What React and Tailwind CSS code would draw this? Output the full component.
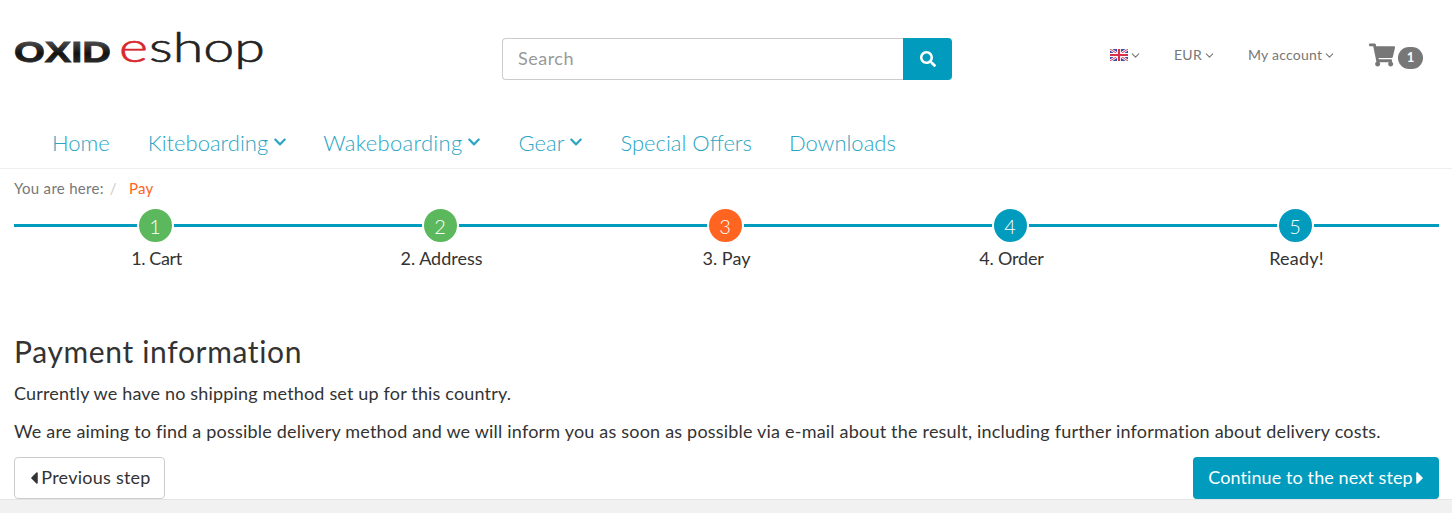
import React from "react";
import { FaSearch, FaShoppingCart, FaChevronDown, FaCaretLeft, FaCaretRight } from "react-icons/fa";
import { ChevronDown } from "lucide-react";

const font = { fontFamily: "Lato, 'Noto Sans', sans-serif" };

function Logo() {
  return (
    <svg width="252" height="38" viewBox="0 0 252 38" className="block overflow-visible">
      <defs>
        <linearGradient id="g" x1="0" y1="0" x2="0" y2="1">
          <stop offset="0" stopColor="#666" />
          <stop offset="0.55" stopColor="#111" />
          <stop offset="1" stopColor="#3a3a3a" />
        </linearGradient>
      </defs>
      <text x="0" y="28" fontFamily="'Liberation Sans', sans-serif" fontWeight="700" fontSize="29" fill="url(#g)" stroke="url(#g)" strokeWidth="0.8" textLength="97" lengthAdjust="spacingAndGlyphs">OXID</text>
      <text x="105" y="28" fontFamily="Lato, sans-serif" fontWeight="300" fontSize="41" fill="#d9272e" stroke="#d9272e" strokeWidth="0.6" textLength="29" lengthAdjust="spacingAndGlyphs">e</text>
      <text x="135" y="28" fontFamily="Lato, sans-serif" fontWeight="300" fontSize="41" fill="#222" stroke="#222" strokeWidth="0.6" textLength="116" lengthAdjust="spacingAndGlyphs">shop</text>
    </svg>
  );
}

function Flag() {
  return (
    <svg width="18" height="12" viewBox="0 0 18 12" className="block">
      <rect width="18" height="12" fill="#3f4fa8" />
      <path d="M0 0L18 12M18 0L0 12" stroke="#fff" strokeWidth="2.6" />
      <path d="M0 0L18 12M18 0L0 12" stroke="#d8405a" strokeWidth="1" />
      <path d="M9 0V12M0 6H18" stroke="#fff" strokeWidth="4" />
      <path d="M9 0V12M0 6H18" stroke="#d8304a" strokeWidth="2.2" />
    </svg>
  );
}

const navItems = [
  ["Home", false, "mr-[0px]"],
  ["Kiteboarding", true, "tracking-[0px]"],
  ["Wakeboarding", true, "tracking-[0.3px] -ml-[2px]"],
  ["Gear", true, "-ml-[1px]"],
  ["Special Offers", false, "-ml-[1px]"],
  ["Downloads", false, "-ml-[1px]"],
];

const steps = [
  ["1", "1. Cart", "bg-[#5cb85c]", "tracking-[-0.4px]"],
  ["2", "2. Address", "bg-[#5cb85c]", ""],
  ["3", "3. Pay", "bg-[#ff6420]", ""],
  ["4", "4. Order", "bg-[#009bbd]", "tracking-[-0.2px]"],
  ["5", "Ready!", "bg-[#009bbd]", "tracking-[0.2px]"],
];

export default function App() {
  return (
    <div style={font} className="w-[1452px] h-[513px] overflow-hidden bg-white flex flex-col text-[#333]">
      <header className="h-[169px] border-b border-[#eeeeee] shrink-0 flex flex-col">
        <div className="flex items-start h-[118px] pl-[14px]">
          <div className="w-[488px] pt-[34px]"><Logo /></div>
          <div className="mt-[38px] w-[450px] h-[42px] flex">
            <div className="flex-1 border border-[#ccc] border-r-0 rounded-l-[4px] flex items-center pl-[15px] pb-[1px] text-[18px] tracking-[0.5px] text-[#999]">Search</div>
            <button className="w-[49px] bg-[#009bbd] rounded-r-[4px] flex items-center justify-center text-white text-[16px]"><FaSearch /></button>
          </div>
          <div className="ml-[158px] flex items-center mt-[38px] h-[34px] text-[14px] tracking-[0.25px] text-[#777]">
            <Flag />
            <ChevronDown size={13} strokeWidth={2} className="ml-[1px]" />
            <span className="ml-[32px] -mt-[1px]">EUR</span>
            <ChevronDown size={13} strokeWidth={2} className="ml-[1px]" />
            <span className="ml-[32px] -mt-[1px]">My account</span>
            <ChevronDown size={13} strokeWidth={2} className="ml-[1px]" />
            <div className="ml-[33px] flex items-start relative top-[0px]">
              <FaShoppingCart className="text-[26px] text-[#777]" />
              <span className="mt-[5px] ml-[3px] w-[25px] h-[22px] rounded-full bg-[#777] text-white text-[13px] font-bold flex items-center justify-center">1</span>
            </div>
          </div>
        </div>
        <nav className="flex items-center h-[50px] pl-[33px] text-[22px] font-light text-[#2aa5c4]">
          {navItems.map(([label, chev, extra]) => (
            <a key={label} className={"flex items-center px-[19px] pb-[2px] " + extra}>
              {label}
              {chev && <FaChevronDown className="ml-[5px] text-[14px]" />}
            </a>
          ))}
        </nav>
      </header>

      <main className="flex-1 flex flex-col px-[14px] pr-[13px]">
        <div className="h-[38px] flex items-center text-[15px] tracking-[0.3px] text-[#777]">
          <span>You are here:</span>
          <span className="ml-[6px] mr-[8px] text-[#ccc]">/</span>
          <span className="ml-[4px] text-[#ff6420]">Pay</span>
        </div>
        <div className="grid grid-cols-5 h-[70px]">
          {steps.map(([n, label, color, extra]) => (
            <div key={n} className="relative flex flex-col items-center">
              <div className="absolute left-0 right-0 top-[17px] h-[3px] bg-[#009bbd]" />
              <div className={"relative -ml-[3px] box-content w-[33px] h-[33px] rounded-full border-2 border-white flex items-center justify-center text-white text-[20px] font-light " + color}>{n}</div>
              <div className={"mt-[2px] text-[18px] leading-[24px] text-[#333] " + extra}>{label}</div>
            </div>
          ))}
        </div>
        <h1 className="mt-[56px] text-[30px] leading-[36px] font-normal tracking-[0.65px] text-[#333]">Payment information</h1>
        <p className="mt-[12px] text-[18px] leading-[24px] tracking-[0.17px]">Currently we have no shipping method set up for this country.</p>
        <p className="mt-[14px] text-[18px] leading-[24px] tracking-[0.2px]">We are aiming to find a possible delivery method and we will inform you as soon as possible via e-mail about the result, including further information about delivery costs.</p>
        <div className="mt-[14px] flex justify-between">
          <button className="h-[42px] w-[151px] border border-[#ccc] rounded-[4px] bg-white flex items-center justify-center pb-[1px] pr-[4px] text-[18px] tracking-[0.25px] text-[#333]"><FaCaretLeft className="text-[20px] -mr-[3px]" />Previous step</button>
          <button className="h-[42px] w-[246px] rounded-[4px] bg-[#009bbd] flex items-center justify-center pb-[1px] pl-[6px] text-[18px] tracking-[0.1px] text-white">Continue to the next step<FaCaretRight className="text-[20px] -ml-[3px]" /></button>
        </div>
      </main>
      <footer className="h-[14px] shrink-0 bg-[#f1f1f1] border-t border-[#e5e5e5]" />
    </div>
  );
}
